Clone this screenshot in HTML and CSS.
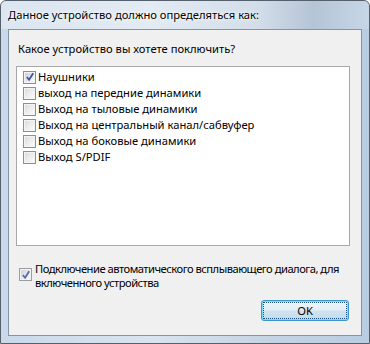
FILE: index.html
```html
<html lang="ru">
<head>
    <meta charset="UTF-8" />
    <title>Устройство</title>
    <link rel="stylesheet" href="styles.css">
</head>
<body>
    <div class="window">
      <div class="titlebar">Данное устройство должно определяться как:</div>
      <div class="client">
        <div class="prompt">Какое устройство вы хотете поключить?</div>

        <ul class="listbox">
          <li><span class="box checked"><svg viewBox="0 0 11 11"><path d="M2 5.5 L4.5 8.5 L9 1.5" /></svg></span>Наушники</li>
          <li><span class="box"></span>выход на передние динамики</li>
          <li><span class="box"></span>Выход на тыловые динамики</li>
          <li><span class="box"></span>Выход на центральный канал/сабвуфер</li>
          <li><span class="box"></span>Выход на боковые динамики</li>
          <li><span class="box"></span>Выход S/PDIF</li>
        </ul>

        <label class="option">
          <span class="box checked"><svg viewBox="0 0 11 11"><path d="M2 5.5 L4.5 8.5 L9 1.5" /></svg></span>
          <span>Подключение автоматического всплывающего диалога, для включенного устройства</span>
        </label>

        <div class="actions">
          <button class="ok"><span>OK</span></button>
        </div>
      </div>
    </div>
</body>
</html>
```

FILE: styles.css
```css
body {
    margin: 0;
    font-family: "Noto Sans", "Open Sans", sans-serif;
    font-size: 11.2px;
    color: #000;
    background: #ffffff;
}

.window {
    width: 370px;
    height: 344px;
    box-sizing: border-box;
    border: 1px solid #56606c;
    border-radius: 6px 6px 0 0;
    background: linear-gradient(90deg, #c9d9ea 0%, #d9e4ef 40%, #c4d3e3 75%, #b9cde2 100%);
    display: flex;
    flex-direction: column;
}

.titlebar {
    height: 28px;
    line-height: 28px;
    padding-left: 7px;
    color: #000;
    text-shadow: 0 0 6px #ffffff, 0 0 3px #ffffff;
    background: linear-gradient(90deg, rgba(255, 255, 255, 0.35) 0%, rgba(255, 255, 255, 0.2) 70%, rgba(150, 160, 175, 0.25) 85%, rgba(255, 255, 255, 0.2) 100%);
    border-radius: 5px 5px 0 0;
}

.client {
    flex: 1;
    margin: 0 7px 7px 7px;
    border: 1px solid #8593a2;
    background: #f0f0f0;
    display: flex;
    flex-direction: column;
    padding: 0 11px 0 7px;
}

.prompt {
    margin: 10px 0 0 2px;
    height: 18px;
    line-height: 18px;
}

.listbox {
    list-style: none;
    margin: 8px 0 0 0;
    padding: 2px 0 0 6px;
    height: 176px;
    border: 1px solid #a8a8a8;
    background: #ffffff;
}

.listbox li {
    height: 16px;
    line-height: 16px;
    display: flex;
    align-items: center;
}

.box {
    width: 13px;
    height: 13px;
    box-sizing: border-box;
    border: 1px solid #8e8f8f;
    background: linear-gradient(135deg, #d8d8d8 0%, #f4f4f4 70%, #ffffff 100%);
    box-shadow: inset 0 0 0 1px #f4f4f4;
    margin-right: 2px;
    flex-shrink: 0;
    display: flex;
    align-items: center;
    justify-content: center;
}

.box.checked {
    background: linear-gradient(135deg, #c8ccd8 0%, #eef0f6 70%, #ffffff 100%);
}

.box svg {
    width: 10px;
    height: 10px;
}

.box path {
    fill: none;
    stroke: #3e56a0;
    stroke-width: 2;
}

.option {
    display: flex;
    align-items: flex-start;
    margin: 16px 0 0 3px;
    line-height: 14px;
    letter-spacing: -0.5px;
}

.option .box {
    margin-top: 6px;
    margin-right: 3px;
    opacity: 0.85;
}

.actions {
    display: flex;
    justify-content: flex-end;
    margin-top: 10px;
    margin-right: 1px;
}

.ok {
    width: 88px;
    height: 21px;
    padding: 1px;
    border: 1px solid #3c97cf;
    border-radius: 3px;
    background: linear-gradient(180deg, #eef6fb 0%, #e2eef6 48%, #cfe3ef 52%, #c3dbea 100%);
    box-shadow: inset 0 0 0 1px #7fdcf9;
    font-family: inherit;
    font-size: 11.2px;
}

.ok span {
    display: block;
    height: 100%;
    line-height: 15px;
    box-sizing: border-box;
    border: 1px dotted #1f4d7a;
}
```
